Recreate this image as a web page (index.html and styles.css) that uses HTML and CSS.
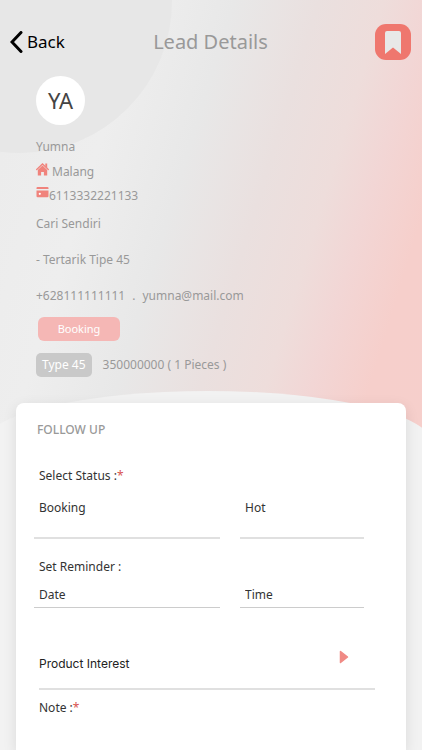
FILE: index.html
```html
<!DOCTYPE html>
<html lang="en">
<head>
    <meta charset="UTF-8">
    <meta name="viewport" content="width=device-width, initial-scale=1.0">
    <title>Lead Details</title>
    <link rel="stylesheet" href="styles.css">
</head>
<body>
    <div class="page">
        <header class="topbar">
            <button type="button" class="back">
                <svg width="13" height="22" viewBox="0 0 13 22" aria-hidden="true">
                    <path d="M11 1.5 L2 11 L11 20.5" fill="none" stroke="#000" stroke-width="3" stroke-linecap="round" stroke-linejoin="miter"/>
                </svg>
                Back
            </button>
            <h1>Lead Details</h1>
            <button type="button" class="bookmark" aria-label="Bookmark">
                <svg width="16" height="23" viewBox="0 0 16 23" aria-hidden="true">
                    <path d="M2 0 H14 Q16 0 16 2 V23 L8 16.500 L0 23 V2 Q0 0 2 0 Z" fill="#e8e8e8"/>
                </svg>
            </button>
        </header>

        <section class="lead">
            <div class="avatar">YA</div>
            <p class="name">Yumna</p>
            <p class="city">
                <svg width="13" height="13" viewBox="0 0 13 13" aria-hidden="true">
                    <path d="M0.700 6.500 L6.500 1 L12.300 6.500" fill="none" stroke="#f0837c" stroke-width="1.300" stroke-linecap="round"/>
                    <path d="M9.300 0.500 H11.200 V5 L9.300 3 Z M1.800 7 L6.500 2.600 L11.200 7 V12.500 H7.900 V9 H5.100 V12.500 H1.800 Z" fill="#f0837c"/>
                </svg>
                Malang
            </p>
            <p class="idcard">
                <svg width="13" height="11" viewBox="0 0 13 11" aria-hidden="true">
                    <path d="M1.500 0 H11.500 Q12.500 0 12.500 1 V2 H0.500 V1 Q0.500 0 1.500 0 Z" fill="#f0837c"/>
                    <path d="M0.500 3.500 H12.500 V9 Q12.500 10.200 11.500 10.200 H1.500 Q0.500 10.200 0.500 9 Z" fill="#f0837c"/>
                    <circle cx="3.800" cy="6.800" r="1.100" fill="#fff"/>
                </svg>6113332221133
            </p>
            <p class="source">Cari Sendiri</p>
            <p class="remark">- Tertarik Tipe 45</p>
            <p class="contact"><span>+628111111111</span><span>.</span><span>yumna@mail.com</span></p>
            <div class="status">Booking</div>
            <div class="product"><span class="type">Type 45</span><span>350000000 ( 1 Pieces )</span></div>
        </section>

        <main class="sheet">
            <form class="card">
                <h2>FOLLOW UP</h2>

                <label class="caption" for="status">Select Status :<span class="required">*</span></label>
                <div class="fields">
                    <select id="status" class="tall">
                        <option>Booking</option>
                    </select>
                    <select id="level" class="tall" aria-label="Level">
                        <option>Hot</option>
                    </select>
                </div>

                <label class="caption reminder" for="date">Set Reminder :</label>
                <div class="fields">
                    <input type="text" id="date" placeholder="Date">
                    <input type="text" id="time" placeholder="Time" aria-label="Time">
                </div>

                <button type="button" class="interest">
                    <span>Product Interest</span>
                    <svg width="10" height="14" viewBox="0 0 10 14" aria-hidden="true">
                        <path d="M1.500 1.500 L8.500 7 L1.500 12.500 Z" fill="#f08a85" stroke="#f08a85" stroke-width="1.500" stroke-linejoin="round"/>
                    </svg>
                </button>

                <label class="caption note" for="note">Note :<span class="required">*</span></label>
                <textarea id="note" rows="1"></textarea>
            </form>
        </main>
    </div>
</body>
</html>
```

FILE: styles.css
```css
* {
    box-sizing: border-box;
}
body {
    margin: 0;
    font-family: 'Noto Sans', 'Open Sans', sans-serif;
    font-size: 12px;
    line-height: 18px;
    color: #999;
}
h1, h2, p {
    margin: 0;
    font-weight: normal;
}
button, input, select, textarea {
    font: inherit;
    margin: 0;
    padding: 0;
    border: none;
    border-radius: 0;
    background: none;
    outline: none;
}
button {
    cursor: pointer;
}
svg {
    display: block;
    flex: none;
}
.page {
    position: relative;
    z-index: 0;
    display: flex;
    flex-direction: column;
    min-height: 100vh;
    overflow: hidden;
    background: linear-gradient(107deg, #ebebeb 0%, #eeeeee 22%, #e8e8e8 36%, #eae0df 49%, #eedddb 59%, #f2d6d5 66%, #f6cfcb 75%, #f6cfcc 100%);
}
/* big soft circle in the corner */
.page::before {
    content: "";
    position: absolute;
    z-index: -1;
    top: -151px;
    left: -132px;
    width: 304px;
    height: 304px;
    border-radius: 50%;
    background: #e7e7e7;
}

/* top bar */
.topbar {
    display: grid;
    grid-template-columns: 1fr auto 1fr;
    align-items: center;
    padding: 24px 11px 0 10px;
}
.back {
    justify-self: start;
    display: flex;
    align-items: center;
    gap: 4px;
    color: #000;
    font-size: 17px;
    line-height: 24px;
}
h1 {
    font-size: 20px;
    line-height: 28px;
}
.bookmark {
    justify-self: end;
    display: flex;
    align-items: center;
    justify-content: center;
    width: 36px;
    height: 36px;
    border-radius: 11px;
    background: #ef776e;
}

/* lead info */
.lead {
    padding: 16px 36px 14px;
}
.avatar {
    width: 49px;
    height: 49px;
    border-radius: 50%;
    background: #fff;
    color: #444;
    font-size: 22px;
    line-height: 49px;
    text-align: center;
}
.name {
    margin-top: 13px;
}
.city, .idcard {
    display: flex;
    align-items: flex-start;
}
.city {
    gap: 3px;
    margin-top: 7px;
}
.idcard {
    margin-top: 6px;
}
.source {
    margin-top: 10px;
}
.remark, .contact {
    margin-top: 18px;
}
.contact {
    display: flex;
    gap: 7px;
}
.status {
    width: 82px;
    margin: 12px 2px 0;
    border-radius: 6px;
    background: #f5b7b5;
    color: #fff;
    font-size: 11px;
    line-height: 24px;
    text-align: center;
}
.product {
    display: flex;
    align-items: center;
    gap: 11px;
    margin-top: 12px;
}
.type {
    padding: 0 6px;
    border-radius: 5px;
    background: #c9c9c9;
    color: #fff;
    line-height: 24px;
}

/* white part with the curved top edge */
.sheet {
    flex: 1;
    display: flex;
    margin: 0 -11px 0 -17px;
    padding: 12px 27px 0 33px;
    border-radius: 50% 50% 0 0 / 53px 53px 0 0;
    background: #f2f2f2;
}
.card {
    flex: 1;
    padding: 18px 42px 0 18px;
    border-radius: 8px 8px 0 0;
    background: #fff;
    box-shadow: 0 4px 14px rgba(0, 0, 0, 0.1);
    color: #333;
}
h2 {
    padding-left: 3px;
    color: #999;
    font-size: 12px;
    font-weight: 500;
}
.caption {
    display: block;
    margin-top: 28px;
    padding-left: 5px;
}
.required {
    color: #d9534f;
}
.fields {
    display: grid;
    grid-template-columns: 3fr 2fr;
    gap: 20px;
}
.fields input, .fields select {
    width: 100%;
    min-width: 0;
    height: 32px;
    padding: 5px 5px 0;
    border-bottom: 1px solid #ccc;
    color: #333;
    appearance: none;
}
.fields .tall {
    height: 54px;
    padding: 0 5px 7px;
    border-bottom: 2px solid #e0e0e0;
}
.fields input::placeholder {
    color: #333;
    opacity: 1;
}
.reminder {
    margin-top: 19px;
}
.interest {
    display: flex;
    align-items: center;
    justify-content: space-between;
    width: calc(100% + 6px);
    height: 64px;
    margin: 18px 0 0 5px;
    padding: 0 26px 0 0;
    border-bottom: 2px solid #e0e0e0;
    color: #222;
    font-family: Inter, Roboto, sans-serif;
}
.interest span {
    padding-top: 14px;
}
.note {
    margin-top: 9px;
}
textarea {
    display: block;
    width: 100%;
    height: 32px;
    padding: 0 5px;
    resize: none;
    color: #333;
}
```
